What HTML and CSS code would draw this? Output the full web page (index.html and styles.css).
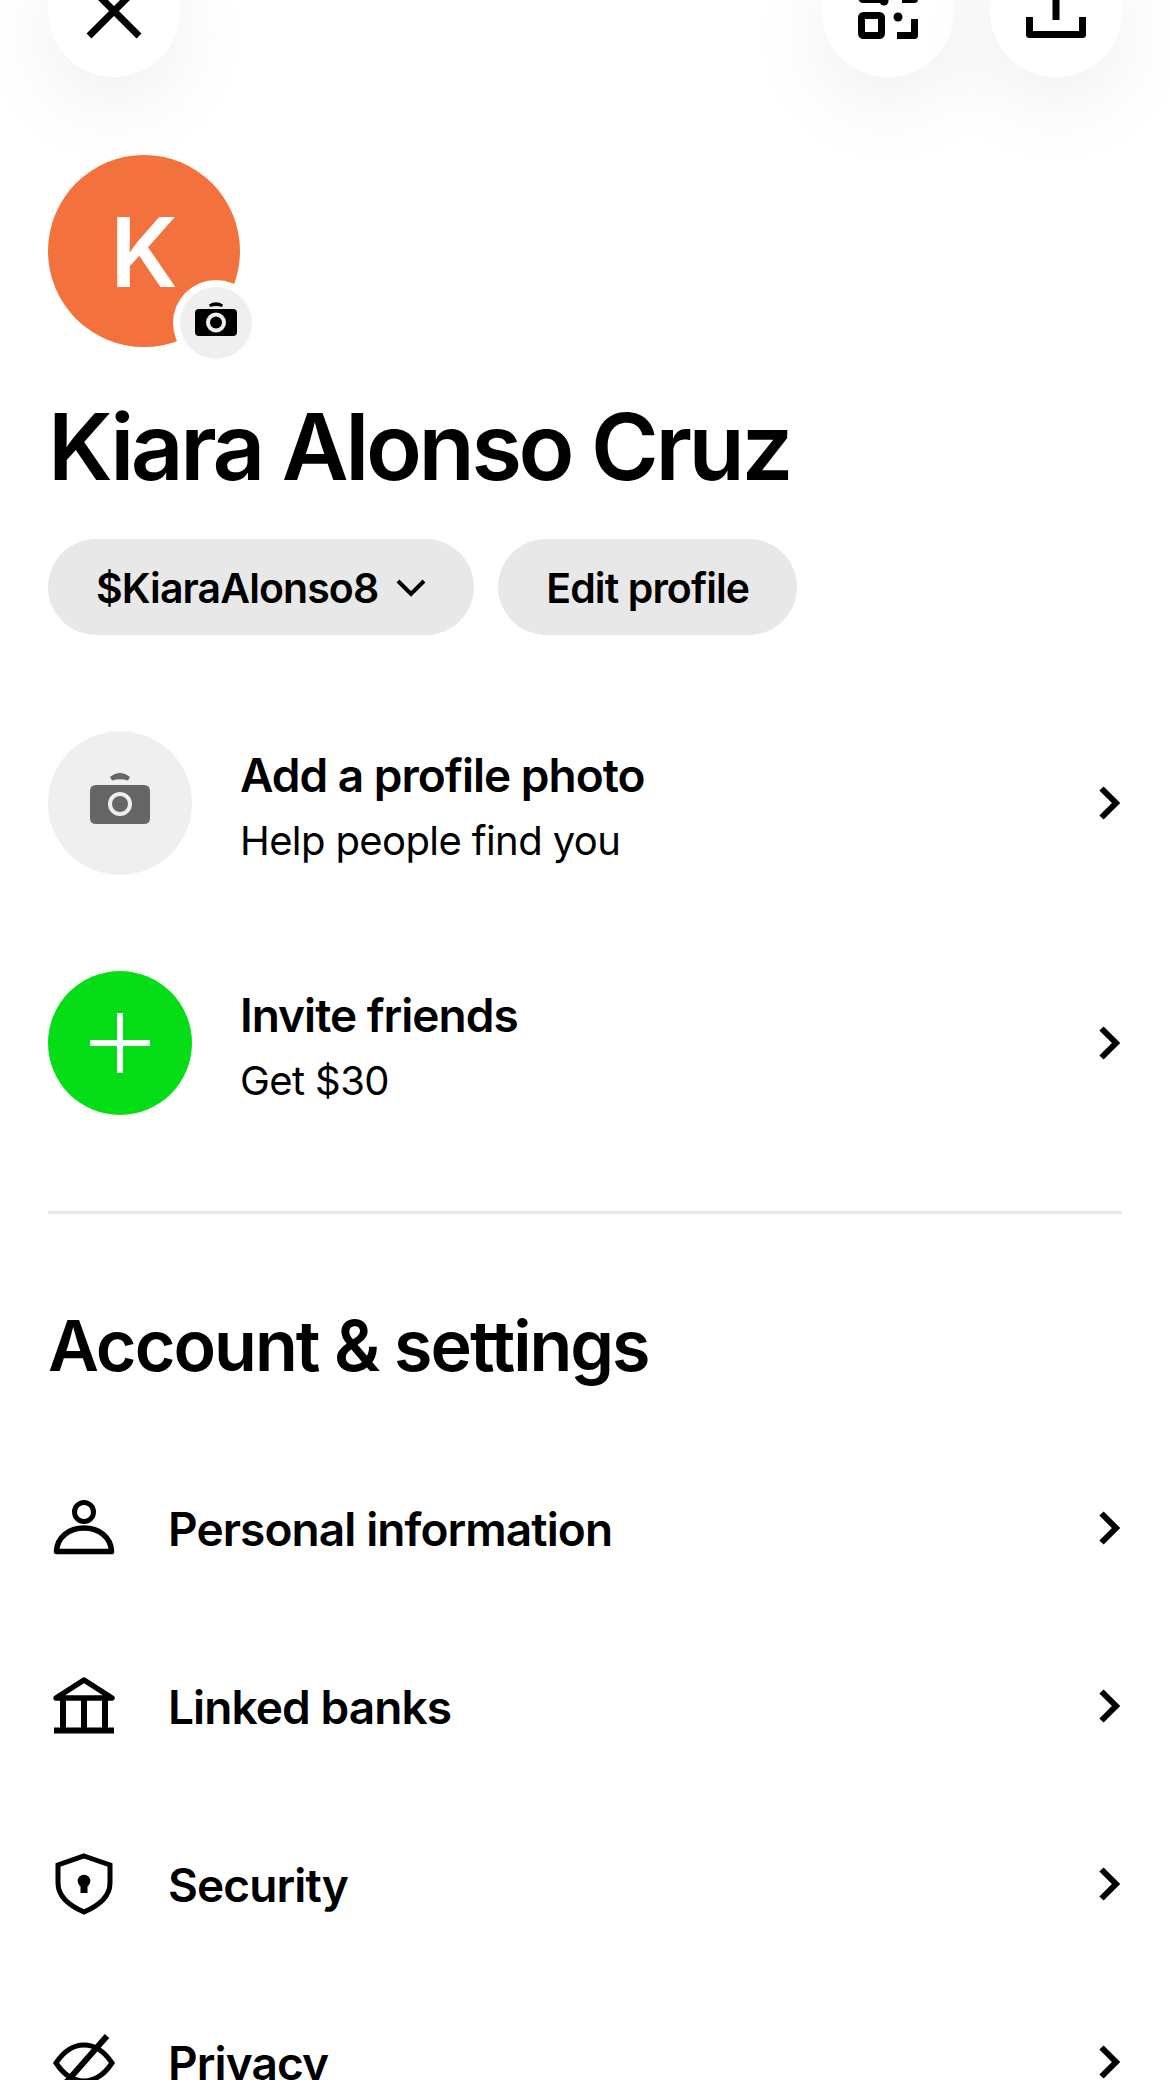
FILE: index.html
```html
<!DOCTYPE html>
<html lang="en">
<head>
    <meta charset="UTF-8">
    <meta name="viewport" content="width=device-width, initial-scale=1.0">
    <title>Profile</title>
    <link rel="stylesheet" href="styles.css">
</head>
<body>
    <div class="toolbar">
        <div class="round-btn">
            <svg class="tb-icon" viewBox="0 0 72 72"><path d="M11 11 61 61M61 11 11 61" fill="none" stroke="#000" stroke-width="7"/></svg>
        </div>
        <div class="toolbar-right">
            <div class="round-btn">
                <svg class="tb-icon" viewBox="0 0 72 72">
                    <rect x="9.500" y="40.500" width="20" height="20" rx="2" fill="none" stroke="#000" stroke-width="7"/>
                    <rect x="9.500" y="4.500" width="20" height="20" rx="2" fill="none" stroke="#000" stroke-width="7"/>
                    <circle cx="46" cy="42" r="4.500"/>
                    <circle cx="32" cy="26" r="4.500"/>
                    <path d="M45 60.500H62.500V44" fill="none" stroke="#000" stroke-width="7" stroke-linejoin="round"/>
                    <path d="M50 24.500H62.500V2" fill="none" stroke="#000" stroke-width="7" stroke-linejoin="round"/>
                </svg>
            </div>
            <div class="round-btn">
                <svg class="tb-icon" viewBox="0 0 72 72">
                    <path d="M36 45V6M22 22 36 8 50 22" fill="none" stroke="#000" stroke-width="7"/>
                    <path d="M9.500 42V59.500H62.500V42" fill="none" stroke="#000" stroke-width="7" stroke-linejoin="round"/>
                </svg>
            </div>
        </div>
    </div>

    <div class="avatar">
        K
        <div class="avatar-badge">
            <svg viewBox="0 0 42 34" class="badge-icon">
                <path d="M14 2.500Q21 -2 28 2.500L27 5Q21 3 15 5Z"/>
                <path fill-rule="evenodd" d="M4 7H38Q42 7 42 11V30Q42 34 38 34H4Q0 34 0 30V11Q0 7 4 7ZM21 10.500A10 10 0 1 0 21 30.500A10 10 0 1 0 21 10.500ZM21 14.500A6 6 0 1 1 21 26.500A6 6 0 1 1 21 14.500Z"/>
            </svg>
        </div>
    </div>

    <h1 class="name">Kiara Alonso Cruz</h1>

    <div class="pills">
        <div class="pill">$KiaraAlonso8
            <svg class="pill-caret" viewBox="0 0 30 18"><path d="M2 2 15 15 28 2" fill="none" stroke="#000" stroke-width="4"/></svg>
        </div>
        <div class="pill">Edit profile</div>
    </div>

    <div class="promo">
        <div class="promo-circle grey">
            <svg viewBox="0 0 60 51" class="promo-camera">
                <path d="M20 4Q30 -4 40 4L38 7.500Q30 5 22 7.500Z"/>
                <path fill-rule="evenodd" d="M6 12H54Q60 12 60 18V45Q60 51 54 51H6Q0 51 0 45V18Q0 12 6 12ZM30 19A12 12 0 1 0 30 43A12 12 0 1 0 30 19ZM30 23A8 8 0 1 1 30 39A8 8 0 1 1 30 23Z"/>
            </svg>
        </div>
        <div class="promo-text">
            <div class="promo-title">Add a profile photo</div>
            <div class="promo-sub">Help people find you</div>
        </div>
        <svg class="chevron" viewBox="0 0 24 38"><path d="M3.500 4.500 18 19 3.500 33.500" fill="none" stroke="#000" stroke-width="6"/></svg>
    </div>

    <div class="promo">
        <div class="promo-circle green">
            <svg viewBox="0 0 60 60" class="promo-plus"><path d="M30 0V60M0 30H60" fill="none" stroke="#fff" stroke-width="6"/></svg>
        </div>
        <div class="promo-text">
            <div class="promo-title">Invite friends</div>
            <div class="promo-sub">Get $30</div>
        </div>
        <svg class="chevron" viewBox="0 0 24 38"><path d="M3.500 4.500 18 19 3.500 33.500" fill="none" stroke="#000" stroke-width="6"/></svg>
    </div>

    <div class="divider"></div>

    <h2 class="section-title">Account &amp; settings</h2>

    <div class="list">
        <div class="list-row">
            <svg class="row-icon" viewBox="0 0 72 72">
                <circle cx="36" cy="19" r="9.500" fill="none" stroke="#000" stroke-width="5"/>
                <path d="M8.500 58.500C9 44 21 35 36 35S63 44 63.500 58.500Z" fill="none" stroke="#000" stroke-width="5.500" stroke-linejoin="round"/>
            </svg>
            <span>Personal information</span>
            <svg class="chevron" viewBox="0 0 24 38"><path d="M3.500 4.500 18 19 3.500 33.500" fill="none" stroke="#000" stroke-width="6"/></svg>
        </div>
        <div class="list-row">
            <svg class="row-icon" viewBox="0 0 72 72">
                <path d="M8 27 36 9 64 27Z" fill="none" stroke="#000" stroke-width="5.500" stroke-linejoin="round"/>
                <path d="M15 27V58M36 27V58M57 27V58" fill="none" stroke="#000" stroke-width="6"/>
                <path d="M6 59.500H66" fill="none" stroke="#000" stroke-width="6"/>
            </svg>
            <span>Linked banks</span>
            <svg class="chevron" viewBox="0 0 24 38"><path d="M3.500 4.500 18 19 3.500 33.500" fill="none" stroke="#000" stroke-width="6"/></svg>
        </div>
        <div class="list-row">
            <svg class="row-icon" viewBox="0 0 72 72">
                <path d="M36 7 62 16V34C62 48 50 57 36 63C22 57 10 48 10 34V16Z" fill="none" stroke="#000" stroke-width="5"/>
                <circle cx="36" cy="32" r="6.300"/>
                <path d="M32.500 32H39.500V44H32.500Z"/>
            </svg>
            <span>Security</span>
            <svg class="chevron" viewBox="0 0 24 38"><path d="M3.500 4.500 18 19 3.500 33.500" fill="none" stroke="#000" stroke-width="6"/></svg>
        </div>
        <div class="list-row">
            <svg class="row-icon" viewBox="0 0 72 72">
                <path d="M8 36C16 24 26 18 36 18S56 24 64 36C56 48 46 54 36 54S16 48 8 36Z" fill="none" stroke="#000" stroke-width="5"/>
                <path d="M59 9 15 59" fill="none" stroke="#000" stroke-width="6"/>
            </svg>
            <span>Privacy</span>
            <svg class="chevron" viewBox="0 0 24 38"><path d="M3.500 4.500 18 19 3.500 33.500" fill="none" stroke="#000" stroke-width="6"/></svg>
        </div>
    </div>
</body>
</html>
```

FILE: styles.css
```css
html, body {
    margin: 0;
    height: 2080px;
    overflow: hidden;
    background: #fff;
}
body {
    font-family: Inter, "Liberation Sans", sans-serif;
    color: #000;
    padding: 0 48px;
    box-sizing: border-box;
}

.toolbar {
    display: flex;
    justify-content: space-between;
    margin-top: -55px;
}
.toolbar-right {
    display: flex;
    gap: 36px;
}
.round-btn {
    width: 132px;
    height: 132px;
    border-radius: 50%;
    background: #fff;
    box-shadow: 0 24px 90px rgba(0, 0, 0, 0.07);
    display: flex;
    align-items: center;
    justify-content: center;
}
.tb-icon {
    width: 72px;
    height: 72px;
    overflow: visible;
}

.avatar {
    position: relative;
    width: 192px;
    height: 192px;
    margin-top: 78px;
    border-radius: 50%;
    background: #f3713c;
    color: #fff;
    font-size: 96px;
    font-weight: 600;
    line-height: 195px;
    text-align: center;
}
.avatar-badge {
    position: absolute;
    left: 132px;
    top: 132px;
    width: 72px;
    height: 72px;
    border-radius: 50%;
    background: #efefef;
    box-shadow: 0 0 0 7px #fff;
    display: flex;
    align-items: center;
    justify-content: center;
}
.badge-icon {
    width: 42px;
    height: 34px;
    margin-bottom: 8px;
}

.name {
    margin: 40px 0 0;
    font-size: 92px;
    font-weight: 600;
    letter-spacing: -3.4px;
    line-height: 120px;
}

.pills {
    display: flex;
    gap: 24px;
    margin-top: 32px;
}
.pill {
    height: 96px;
    padding: 2px 48px 0;
    box-sizing: border-box;
    border-radius: 48px;
    background: #e8e8e8;
    display: flex;
    align-items: center;
    gap: 18px;
    font-size: 41px;
    font-weight: 600;
    letter-spacing: -0.9px;
}
.pill-caret {
    width: 30px;
    height: 18px;
}

.promo {
    display: flex;
    align-items: center;
    gap: 48px;
    margin-top: 96px;
}
.promo-circle {
    width: 144px;
    height: 144px;
    flex: none;
    border-radius: 50%;
    display: flex;
    align-items: center;
    justify-content: center;
}
.grey { background: #efefef; }
.green { background: #05dd17; }
.promo-camera {
    width: 60px;
    height: 51px;
    fill: #666;
    margin-bottom: 9px;
}
.promo-plus {
    width: 60px;
    height: 60px;
}
.promo-text {
    flex: 1;
    padding-top: 6px;
}
.promo-title {
    font-size: 46px;
    font-weight: 600;
    letter-spacing: -1px;
    line-height: 60px;
}
.promo-sub {
    font-size: 40px;
    letter-spacing: -0.6px;
    line-height: 52px;
    margin-top: 10px;
}
.chevron {
    width: 24px;
    height: 38px;
    flex: none;
}
.list-row .chevron {
    margin-bottom: 2px;
}

.divider {
    height: 3px;
    background: #e8e8e8;
    margin-top: 96px;
}

.section-title {
    margin: 90px 0 0;
    font-size: 70px;
    font-weight: 600;
    letter-spacing: -2px;
    line-height: 84px;
}

.list {
    margin-top: 52px;
}
.list-row {
    display: flex;
    align-items: center;
    height: 178px;
    font-size: 46px;
    font-weight: 600;
    letter-spacing: -0.9px;
}
.list-row span {
    flex: 1;
    margin-left: 48px;
}
.row-icon {
    width: 72px;
    height: 72px;
    flex: none;
}
```
